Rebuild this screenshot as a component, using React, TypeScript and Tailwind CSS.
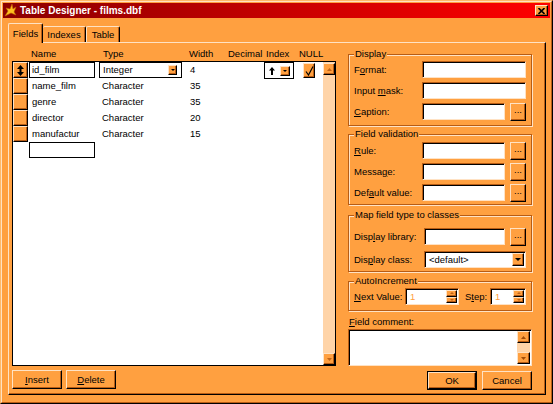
import React from "react";

const raised =
  "bg-[#ffa040] border border-t-[#ffe2c4] border-l-[#ffe2c4] border-r-black border-b-black shadow-[inset_-1px_-1px_0_#b85c14]";
const sunken =
  "bg-white border border-t-[#b85c14] border-l-[#b85c14] border-r-[#ffe2c4] border-b-[#ffe2c4] shadow-[inset_1px_1px_0_#000]";

function U({ children }: { children: React.ReactNode }) {
  return <span className="underline underline-offset-[1px] decoration-[1px]">{children}</span>;
}

function Tri({ up = false, color = "#000", w = 5, h = 3 }: { up?: boolean; color?: string; w?: number; h?: number }) {
  return (
    <svg width={w} height={h} viewBox={`0 0 ${w} ${h}`}>
      <polygon points={up ? `0,${h} ${w},${h} ${w / 2},0` : `0,0 ${w},0 ${w / 2},${h}`} fill={color} />
    </svg>
  );
}

function UpDown() {
  return (
    <svg width="7" height="11" viewBox="0 0 7 11">
      <polygon points="3.5,0 0,4 7,4" fill="#000" />
      <rect x="2.5" y="4" width="2" height="3" fill="#000" />
      <polygon points="0,7 7,7 3.5,11" fill="#000" />
    </svg>
  );
}

function UpArrow() {
  return (
    <svg width="6" height="8" viewBox="0 0 6 8">
      <polygon points="3,0 0,3.5 2,3.5 2,8 4,8 4,3.5 6,3.5" fill="#000" />
    </svg>
  );
}

function Check() {
  return (
    <svg width="9" height="10" viewBox="0 0 9 10">
      <path d="M1 5.5 L3.5 9 L8 0.5" stroke="#000" strokeWidth="1.2" fill="none" />
    </svg>
  );
}

function Btn({ className = "", children }: { className?: string; children: React.ReactNode }) {
  return <div className={`${raised} flex items-center justify-center ${className}`}>{children}</div>;
}

function Dots() {
  return <Btn className="ml-[5px] w-[16px] h-[18px] pb-[3px]">...</Btn>;
}

function Group({ title, className = "", children }: { title: string; className?: string; children: React.ReactNode }) {
  return (
    <fieldset
      className={`border border-[#b85c14] shadow-[1px_1px_0_#ffe2c4,inset_1px_1px_0_#ffe2c4] px-[5px] min-w-0 ${className}`}
    >
      <legend className="px-[1px] leading-[12px] bg-[#ffa040]">{title}</legend>
      {children}
    </fieldset>
  );
}

function VScroll({ className = "", arrow = "#c0641a" }: { className?: string; arrow?: string }) {
  return (
    <div className={`flex flex-col justify-between bg-[#ffd4a8] ${className}`}>
      <Btn className="h-[12px]">
        <Tri up color={arrow} />
      </Btn>
      <Btn className="h-[12px]">
        <Tri color={arrow} />
      </Btn>
    </div>
  );
}

function Spinner({ className = "" }: { className?: string }) {
  return (
    <div className={`${sunken} h-[17px] flex items-center ${className}`}>
      <span className="pl-[4px] text-[#ffa040]">1</span>
      <div className="ml-auto flex flex-col h-full py-[1px] pr-[1px]">
        <Btn className="w-[11px] h-[7px]">
          <Tri up color="#c0641a" w={4} h={2} />
        </Btn>
        <Btn className="w-[11px] h-[7px]">
          <Tri color="#c0641a" w={4} h={2} />
        </Btn>
      </div>
    </div>
  );
}

const rows = [
  ["name_film", "Character", "35"],
  ["genre", "Character", "35"],
  ["director", "Character", "20"],
  ["manufactur", "Character", "15"],
];

export default function App() {
  return (
    <div className="w-[553px] h-[404px] bg-[#ffa040] border border-t-[#ffb868] border-l-[#ffb868] border-r-black border-b-black font-['Liberation_Sans',Arial,sans-serif] text-[9.5px] leading-[12px] text-black select-none">
      <div className="h-full border border-t-[#ffe2c4] border-l-[#ffe2c4] border-r-[#b85c14] border-b-[#b85c14] p-px flex flex-col">
        {/* Title bar */}
        <div className="h-[15px] bg-[linear-gradient(to_right,#8c0000,#ff0000)] flex items-center">
          <svg width="13" height="13" viewBox="0 0 13 13" className="ml-[1px]">
            <polygon points="1,12 4,7 2,4 6,5 8,0 9,5 12,3 10,8 12,11 7,9" fill="#ffc020" stroke="#c06000" strokeWidth="0.6" />
          </svg>
          <span className="ml-[3px] text-white font-bold text-[10px]">Table Designer - films.dbf</span>
          <Btn className="ml-auto mr-[2px] w-[13px] h-[11px]">
            <svg width="7" height="6" viewBox="0 0 7 6">
              <path d="M0.5 0 L6.5 6 M6.5 0 L0.5 6" stroke="#000" strokeWidth="1.6" />
            </svg>
          </Btn>
        </div>

        {/* Tabs */}
        <div className="h-[24px] pl-[5px] flex items-end">
          <div className="relative z-10 -mb-px w-[35px] h-[20px] bg-[#ffa040] border-t border-l border-r border-t-[#ffe2c4] border-l-[#ffe2c4] border-r-black rounded-t-[2px] shadow-[inset_-1px_0_0_#b85c14] flex justify-center pt-[4px]">
            Fields
          </div>
          <div className="w-[43px] h-[16px] border-t border-r border-t-[#ffe2c4] border-r-black rounded-t-[2px] shadow-[inset_-1px_0_0_#b85c14] flex justify-center pt-[2px]">
            Indexes
          </div>
          <div className="w-[34px] h-[16px] border-t border-r border-l border-l-[#ffe2c4] border-t-[#ffe2c4] border-r-black rounded-t-[2px] shadow-[inset_-1px_0_0_#b85c14] flex justify-center pt-[2px]">
            Table
          </div>
        </div>

        {/* Tab page */}
        <div className="ml-[5px] mr-[4px] h-[353px] border border-t-[#ffe2c4] border-l-[#ffe2c4] border-r-black border-b-black shadow-[inset_-1px_-1px_0_#b85c14] flex pl-[3px]">
          {/* Left column */}
          <div className="w-[324px] flex flex-col">
            <div className="h-[18px] flex items-end pb-[1px] pl-[19px]">
              <span className="w-[72px]">Name</span>
              <span className="w-[86px]">Type</span>
              <span className="w-[39px]">Width</span>
              <span className="w-[38px]">Decimal</span>
              <span className="w-[33px]">Index</span>
              <span>NULL</span>
            </div>
            <div className="h-[305px] border border-black bg-white flex">
              <div className="w-[310px] flex flex-col">
                <div className="h-[16px] flex">
                  <div className={`w-[15px] ${raised} flex items-center justify-center`}>
                    <UpDown />
                  </div>
                  <div className="ml-[1px] w-[66px] border border-black flex items-center pl-[2px]">id_film</div>
                  <div className="ml-[4px] w-[83px] border border-black flex items-center pl-[3px]">
                    Integer
                    <Btn className="ml-auto mr-[4px] w-[9px] h-[10px]">
                      <Tri w={4} h={2} />
                    </Btn>
                  </div>
                  <div className="ml-[8px] w-[74px] flex items-center">4</div>
                  <div className="w-[30px] h-[17px] border border-black flex items-center pl-[4px]">
                    <UpArrow />
                    <Btn className="ml-auto mr-[3px] w-[10px] h-[10px]">
                      <Tri w={4} h={2} />
                    </Btn>
                  </div>
                  <Btn className="ml-[9px] w-[12px] h-[15px] mt-[1px]">
                    <Check />
                  </Btn>
                </div>
                {rows.map((r) => (
                  <div key={r[0]} className="h-[16px] flex">
                    <div className={`w-[15px] ${raised}`} />
                    <div className="ml-[1px] w-[66px] flex items-center pl-[3px]">{r[0]}</div>
                    <div className="ml-[4px] w-[83px] flex items-center pl-[3px]">{r[1]}</div>
                    <div className="ml-[8px] w-[74px] flex items-center">{r[2]}</div>
                  </div>
                ))}
                <div className="h-[16px] flex">
                  <div className="w-[15px]" />
                  <div className="ml-[1px] w-[66px] border border-black" />
                </div>
              </div>
              <VScroll className="w-[12px] pt-[1px]" />
            </div>
            <div className="mt-[4px] flex gap-[4px]">
              <Btn className="w-[50px] h-[19px]">
                <span>
                  <U>I</U>nsert
                </span>
              </Btn>
              <Btn className="w-[50px] h-[19px]">
                <span>
                  <U>D</U>elete
                </span>
              </Btn>
            </div>
          </div>

          {/* Right column */}
          <div className="ml-[12px] w-[184px] flex flex-col pt-[5px]">
            <Group title="Display">
              <div className="pt-[1px] pb-[5px] flex flex-col gap-[4px]">
                <div className="flex items-center h-[17px]">
                  <span className="w-[68px]">
                    F<U>o</U>rmat:
                  </span>
                  <div className={`${sunken} w-[104px] h-[17px]`} />
                </div>
                <div className="flex items-center h-[17px]">
                  <span className="w-[68px]">
                    Input <U>m</U>ask:
                  </span>
                  <div className={`${sunken} w-[104px] h-[17px]`} />
                </div>
                <div className="flex items-center h-[17px]">
                  <span className="w-[68px]">
                    <U>C</U>aption:
                  </span>
                  <div className={`${sunken} w-[83px] h-[17px]`} />
                  <Dots />
                </div>
              </div>
            </Group>
            <Group title="Field validation" className="mt-[2px]">
              <div className="pt-[2px] pb-[3px] flex flex-col gap-[4px]">
                <div className="flex items-center h-[17px]">
                  <span className="w-[68px]">
                    <U>R</U>ule:
                  </span>
                  <div className={`${sunken} w-[83px] h-[17px]`} />
                  <Dots />
                </div>
                <div className="flex items-center h-[17px]">
                  <span className="w-[68px]">
                    Messa<U>g</U>e:
                  </span>
                  <div className={`${sunken} w-[83px] h-[17px]`} />
                  <Dots />
                </div>
                <div className="flex items-center h-[17px]">
                  <span className="w-[68px]">
                    Def<U>a</U>ult value:
                  </span>
                  <div className={`${sunken} w-[83px] h-[17px]`} />
                  <Dots />
                </div>
              </div>
            </Group>
            <Group title="Map field type to classes" className="mt-[4px]">
              <div className="pt-[7px] pb-[3px] flex flex-col gap-[6px]">
                <div className="flex items-center h-[17px]">
                  <span className="w-[70px]">
                    Disp<U>l</U>ay library:
                  </span>
                  <div className={`${sunken} w-[81px] h-[17px]`} />
                  <Dots />
                </div>
                <div className="flex items-center h-[17px]">
                  <span className="w-[70px]">
                    Dis<U>p</U>lay class:
                  </span>
                  <div className={`${sunken} w-[102px] h-[17px] flex items-center pl-[4px]`}>
                    &lt;default&gt;
                    <Btn className="ml-auto mr-[1px] w-[12px] h-[13px]">
                      <Tri w={6} h={3} />
                    </Btn>
                  </div>
                </div>
              </div>
            </Group>
            <Group title="AutoIncrement" className="mt-[3px]">
              <div className="pt-[1px] pb-[5px] flex items-center h-[23px]">
                <span className="w-[51px]">
                  <U>N</U>ext Value:
                </span>
                <Spinner className="w-[54px]" />
                <span className="ml-[6px] w-[25px]">
                  S<U>t</U>ep:
                </span>
                <Spinner className="w-[36px]" />
              </div>
            </Group>
            <div className="mt-[5px] pl-[1px]">
              <U>F</U>ield comment:
            </div>
            <div className={`${sunken} mt-[1px] h-[37px] flex justify-end p-[1px]`}>
              <VScroll className="w-[13px]" arrow="#a04c08" />
            </div>
            <div className="mt-[5px] flex justify-end gap-[5px]">
              <div className="w-[50px] h-[19px] border border-black">
                <Btn className="w-full h-full">OK</Btn>
              </div>
              <Btn className="w-[50px] h-[19px]">Cancel</Btn>
            </div>
          </div>
        </div>
      </div>
    </div>
  );
}
